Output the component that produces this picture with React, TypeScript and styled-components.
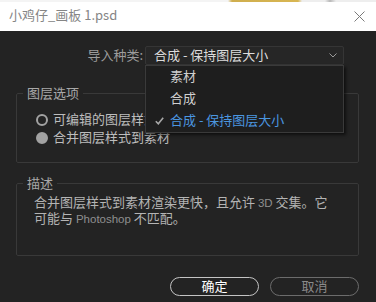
import React from 'react';
import styled, { createGlobalStyle } from 'styled-components';

const GlobalStyle = createGlobalStyle`
  html, body {
    margin: 0;
    padding: 0;
    background: #232323;
  }
  body {
    font-family: 'Noto Sans CJK SC', 'Noto Sans', sans-serif;
  }
`;

const Window = styled.div`
  width: 376px;
  height: 302px;
  display: flex;
  flex-direction: column;
  background: #232323;
  overflow: hidden;
  position: relative;
`;

const Strip = styled.div`
  height: 2px;
  background: linear-gradient(
    to right,
    #f4f4f4 0,
    #f4f4f4 228px,
    #cfae4e 232px,
    #d8b652 298px,
    #eeeeee 302px,
    #eeeeee 325px,
    #b8b8b8 330px,
    #eeeeee 336px
  );
`;

const TitleBar = styled.div`
  height: 29px;
  background: #ffffff;
  display: flex;
  align-items: center;
  justify-content: space-between;
  padding: 0 11px 3px 9px;
  box-sizing: border-box;
`;

const Title = styled.span`
  font-size: 13px;
  color: #858585;
  line-height: 16px;
`;

const CloseIcon = styled.svg`
  width: 11px;
  height: 11px;
  margin-top: 2px;
`;

const Body = styled.div`
  flex: 1;
  display: flex;
  flex-direction: column;
  padding: 15px 17px 0 16px;
`;

const SelectRow = styled.div`
  display: flex;
  justify-content: flex-end;
  align-items: center;
  gap: 2px;
  padding-right: 15px;
  position: relative;
`;

const Label = styled.span`
  font-size: 13px;
  color: #9c9c9c;
  line-height: 17px;
  padding-bottom: 2px;
`;

const SelectBox = styled.div`
  width: 199px;
  height: 19px;
  box-sizing: border-box;
  background: #262626;
  border: 1px solid #353535;
  border-radius: 2px;
  display: flex;
  align-items: center;
  justify-content: space-between;
  padding: 0 6px 1px 8px;
  font-size: 13px;
  line-height: 16px;
  color: #dcdcdc;
  position: relative;
`;

const Chevron = styled.svg`
  margin-top: 1px;
`;

const Menu = styled.div`
  position: absolute;
  top: 18px;
  left: -1px;
  width: 199px;
  box-sizing: border-box;
  background: #1e1e1e;
  border: 1px solid #3a3a3a;
  box-shadow: 2px 2px 3px rgba(0, 0, 0, 0.6);
  z-index: 5;
`;

const MenuItem = styled.div<{ $active?: boolean }>`
  height: 22px;
  box-sizing: border-box;
  padding: 0 0 2px 9px;
  display: flex;
  align-items: center;
  font-size: 13px;
  line-height: 16px;
  color: ${(p) => (p.$active ? '#4b96e0' : '#d0d0d0')};
`;

const CheckSlot = styled.span`
  width: 15px;
  display: flex;
  align-items: center;
  padding-top: 2px;
`;

const Group = styled.fieldset<{ $top: number; $bottom: number }>`
  margin: ${(p) => p.$top}px 0 0 0;
  border: 1px solid #393939;
  border-radius: 2px;
  padding: 0 0 ${(p) => p.$bottom}px 0;
  min-width: 0;
`;

const Legend = styled.legend`
  margin-left: 6px;
  padding: 0 4px;
  font-size: 13px;
  line-height: 18px;
  height: 18px;
  color: #a8a8a8;
`;

const RadioList = styled.div`
  display: flex;
  flex-direction: column;
  padding: 8px 0 0 19px;
`;

const RadioRow = styled.div`
  display: flex;
  align-items: center;
  gap: 5px;
  height: 18px;
  font-size: 13px;
  line-height: 16px;
  color: #bdbdbd;
`;

const RadioDot = styled.span<{ $filled?: boolean }>`
  width: 12px;
  height: 12px;
  box-sizing: border-box;
  border-radius: 50%;
  border: 2px solid #a2a2a2;
  background: ${(p) => (p.$filled ? '#a2a2a2' : 'transparent')};
  margin-top: 1px;
`;

const Desc = styled.p`
  margin: 2px 0 0 17px;
  font-size: 13px;
  line-height: 16px;
  color: #b4b4b4;
`;

const Latin = styled.span`
  font-family: 'Liberation Sans', Arial, sans-serif;
  font-size: 11.5px;
  line-height: 1;
  color: #8f8f8f;
`;

const ButtonRow = styled.div`
  display: flex;
  justify-content: flex-end;
  gap: 11px;
  margin-top: 21px;
`;

const Button = styled.button<{ $primary?: boolean }>`
  width: 89px;
  height: 19px;
  box-sizing: border-box;
  border-radius: 10px;
  background: transparent;
  border: 1.5px solid ${(p) => (p.$primary ? '#c4c4c4' : '#6c6c6c')};
  color: ${(p) => (p.$primary ? '#ffffff' : '#8a8a8a')};
  font-family: 'Noto Sans CJK SC', sans-serif;
  font-size: 13px;
  line-height: 14px;
  padding: 0 0 1px;
`;

export default function App() {
  return (
    <>
      <GlobalStyle />
      <Window>
        <Strip />
        <TitleBar>
          <Title>小鸡仔_画板 1.psd</Title>
          <CloseIcon viewBox="0 0 11 11">
            <path d="M0.5 0.5 L10.5 10.5 M10.5 0.5 L0.5 10.5" stroke="#7a7a7a" strokeWidth="1" fill="none" />
          </CloseIcon>
        </TitleBar>
        <Body>
          <SelectRow>
            <Label>导入种类:</Label>
            <SelectBox>
              <span>合成 - 保持图层大小</span>
              <Chevron width="8" height="5" viewBox="0 0 8 5">
                <path d="M0.5 0.5 L4 4 L7.5 0.5" stroke="#9a9a9a" strokeWidth="1" fill="none" />
              </Chevron>
              <Menu>
                <MenuItem>
                  <CheckSlot />
                  素材
                </MenuItem>
                <MenuItem>
                  <CheckSlot />
                  合成
                </MenuItem>
                <MenuItem $active>
                  <CheckSlot>
                    <svg width="9" height="8" viewBox="0 0 9 8">
                      <path d="M0.8 4.2 L3.3 6.8 L8.2 0.8" stroke="#a8a8a8" strokeWidth="1.6" fill="none" />
                    </svg>
                  </CheckSlot>
                  合成 - 保持图层大小
                </MenuItem>
              </Menu>
            </SelectBox>
          </SelectRow>
          <Group $top={19} $bottom={16}>
            <Legend>图层选项</Legend>
            <RadioList>
              <RadioRow>
                <RadioDot />
                可编辑的图层样式
              </RadioRow>
              <RadioRow>
                <RadioDot $filled />
                合并图层样式到素材
              </RadioRow>
            </RadioList>
          </Group>
          <Group $top={11} $bottom={29}>
            <Legend>描述</Legend>
            <Desc>
              合并图层样式到素材渲染更快，且允许 <Latin>3D</Latin> 交集。它
              <br />
              可能与 <Latin>Photoshop</Latin> 不匹配。
            </Desc>
          </Group>
          <ButtonRow>
            <Button $primary>确定</Button>
            <Button>取消</Button>
          </ButtonRow>
        </Body>
      </Window>
    </>
  );
}
